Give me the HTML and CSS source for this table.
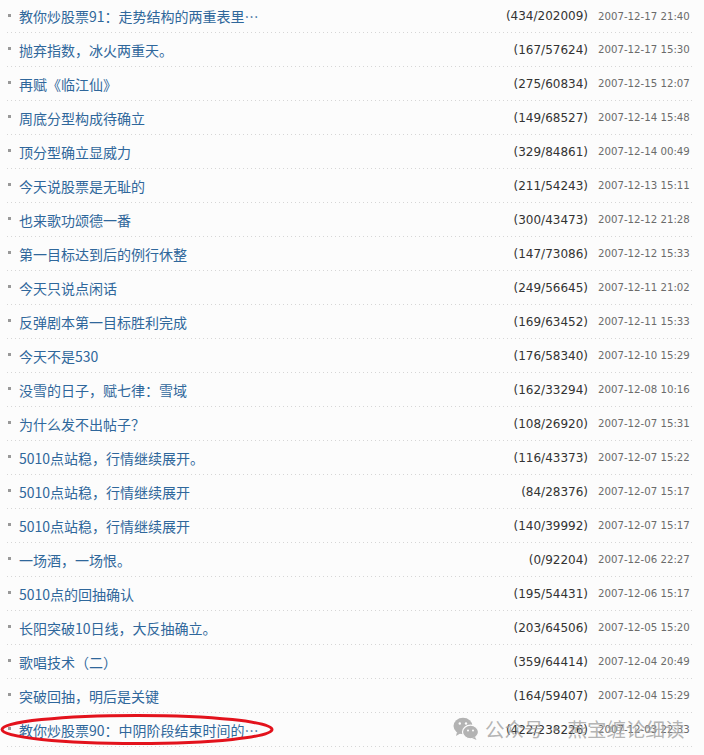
FILE: index.html
```html
<!DOCTYPE html>
<html lang="zh-CN">
<head>
    <meta charset="UTF-8">
    <meta name="viewport" content="width=device-width, initial-scale=1.0">
    <title>博文目录</title>
    <link rel="stylesheet" href="styles.css">
</head>
<body>
    <div class="page">
        <ul class="article-list">
            <li><a href="#" class="title">教你炒股票91：走势结构的两重表里…</a><span class="count">(434/202009)</span><span class="date">2007-12-17 21:40</span></li>
            <li><a href="#" class="title">抛弃指数，冰火两重天。</a><span class="count">(167/57624)</span><span class="date">2007-12-17 15:30</span></li>
            <li><a href="#" class="title">再赋《临江仙》</a><span class="count">(275/60834)</span><span class="date">2007-12-15 12:07</span></li>
            <li><a href="#" class="title">周底分型构成待确立</a><span class="count">(149/68527)</span><span class="date">2007-12-14 15:48</span></li>
            <li><a href="#" class="title">顶分型确立显威力</a><span class="count">(329/84861)</span><span class="date">2007-12-14 00:49</span></li>
            <li><a href="#" class="title">今天说股票是无耻的</a><span class="count">(211/54243)</span><span class="date">2007-12-13 15:11</span></li>
            <li><a href="#" class="title">也来歌功颂德一番</a><span class="count">(300/43473)</span><span class="date">2007-12-12 21:28</span></li>
            <li><a href="#" class="title">第一目标达到后的例行休整</a><span class="count">(147/73086)</span><span class="date">2007-12-12 15:33</span></li>
            <li><a href="#" class="title">今天只说点闲话</a><span class="count">(249/56645)</span><span class="date">2007-12-11 21:02</span></li>
            <li><a href="#" class="title">反弹剧本第一目标胜利完成</a><span class="count">(169/63452)</span><span class="date">2007-12-11 15:33</span></li>
            <li><a href="#" class="title">今天不是530</a><span class="count">(176/58340)</span><span class="date">2007-12-10 15:29</span></li>
            <li><a href="#" class="title">没雪的日子，赋七律：雪域</a><span class="count">(162/33294)</span><span class="date">2007-12-08 10:16</span></li>
            <li><a href="#" class="title">为什么发不出帖子？</a><span class="count">(108/26920)</span><span class="date">2007-12-07 15:31</span></li>
            <li><a href="#" class="title">5010点站稳，行情继续展开。</a><span class="count">(116/43373)</span><span class="date">2007-12-07 15:22</span></li>
            <li><a href="#" class="title">5010点站稳，行情继续展开</a><span class="count">(84/28376)</span><span class="date">2007-12-07 15:17</span></li>
            <li><a href="#" class="title">5010点站稳，行情继续展开</a><span class="count">(140/39992)</span><span class="date">2007-12-07 15:17</span></li>
            <li><a href="#" class="title">一场酒，一场恨。</a><span class="count">(0/92204)</span><span class="date">2007-12-06 22:27</span></li>
            <li><a href="#" class="title">5010点的回抽确认</a><span class="count">(195/54431)</span><span class="date">2007-12-06 15:17</span></li>
            <li><a href="#" class="title">长阳突破10日线，大反抽确立。</a><span class="count">(203/64506)</span><span class="date">2007-12-05 15:20</span></li>
            <li><a href="#" class="title">歌唱技术（二）</a><span class="count">(359/64414)</span><span class="date">2007-12-04 20:49</span></li>
            <li><a href="#" class="title">突破回抽，明后是关键</a><span class="count">(164/59407)</span><span class="date">2007-12-04 15:29</span></li>
            <li class="marked"><a href="#" class="title">教你炒股票90：中阴阶段结束时间的…</a><span class="count">(422/238226)</span><span class="date">2007-12-03 22:33</span>
                <!-- red hand-drawn circle round the last title -->
                <svg class="circle" width="278" height="34" viewBox="0 0 278 34">
                    <ellipse cx="137" cy="16.5" rx="135" ry="14" fill="none" stroke="#e3121c" stroke-width="3"/>
                </svg>
            </li>
        </ul>

        <div class="watermark">
            <svg class="wx-icon" width="26" height="24" viewBox="0 0 26 24">
                <ellipse cx="10" cy="9" rx="9.5" ry="8.2" fill="#b3b3b3"/>
                <path d="M4 15 L3 19 L8 16 Z" fill="#b3b3b3"/>
                <ellipse cx="17.5" cy="15" rx="8" ry="6.8" fill="#b3b3b3" stroke="#fcfcfc" stroke-width="1.2"/>
                <path d="M22 20 L23.5 23 L19 21 Z" fill="#b3b3b3"/>
                <circle cx="6.8" cy="6.5" r="1.2" fill="#fcfcfc"/>
                <circle cx="13" cy="6.5" r="1.2" fill="#fcfcfc"/>
                <circle cx="15" cy="13.5" r="1" fill="#fcfcfc"/>
                <circle cx="20" cy="13.5" r="1" fill="#fcfcfc"/>
            </svg>
            <span class="wm-text">公众号<span class="wm-dot">·</span>燕宝缠论细读</span>
        </div>
    </div>
</body>
</html>
```

FILE: styles.css
```css
* {
    margin: 0;
    padding: 0;
    box-sizing: border-box;
}
body {
    background: #fcfcfc;
    width: 704px;
    height: 755px;
    overflow: hidden;
}
.page {
    position: relative;
    padding: 0 11px 0 6px;
}
.article-list {
    list-style: none;
}
.article-list li {
    position: relative;
    display: flex;
    align-items: center;
    height: 34px;
    padding: 0 0 1px 13px;
    background-image:
        linear-gradient(#999, #999),
        linear-gradient(to right, #d6d6d6 1px, transparent 1px);
    background-size: 3px 3px, 4px 1px;
    background-position: 2px 14px, 1px 33px;
    background-repeat: no-repeat, repeat-x;
}
.article-list li:first-child {
    height: 34px;
    margin-top: -1px;
    padding-top: 1px;
    background-position: 2px 15px, 1px 33px;
}
.title {
    flex: 1;
    font-family: "Noto Sans CJK SC", "Liberation Sans", sans-serif;
    font-size: 14px;
    color: #2f679b;
    text-decoration: none;
    white-space: nowrap;
}
.count {
    font-family: "DejaVu Sans", sans-serif;
    font-size: 12px;
    color: #333;
    margin-right: 10px;
}
.date {
    width: 95px;
    font-family: "DejaVu Sans", sans-serif;
    font-size: 10.2px;
    color: #6b6b6b;
}
.circle {
    position: absolute;
    left: -6px;
    top: 0;
}
.watermark {
    position: absolute;
    left: 453px;
    top: 715px;
    display: flex;
    align-items: center;
    gap: 6px;
    color: rgba(160, 160, 160, 0.8);
    font-family: "Noto Sans CJK SC", sans-serif;
    font-size: 19.5px;
}
.wm-dot {
    display: inline-block;
    width: 24px;
    text-align: center;
}
```
